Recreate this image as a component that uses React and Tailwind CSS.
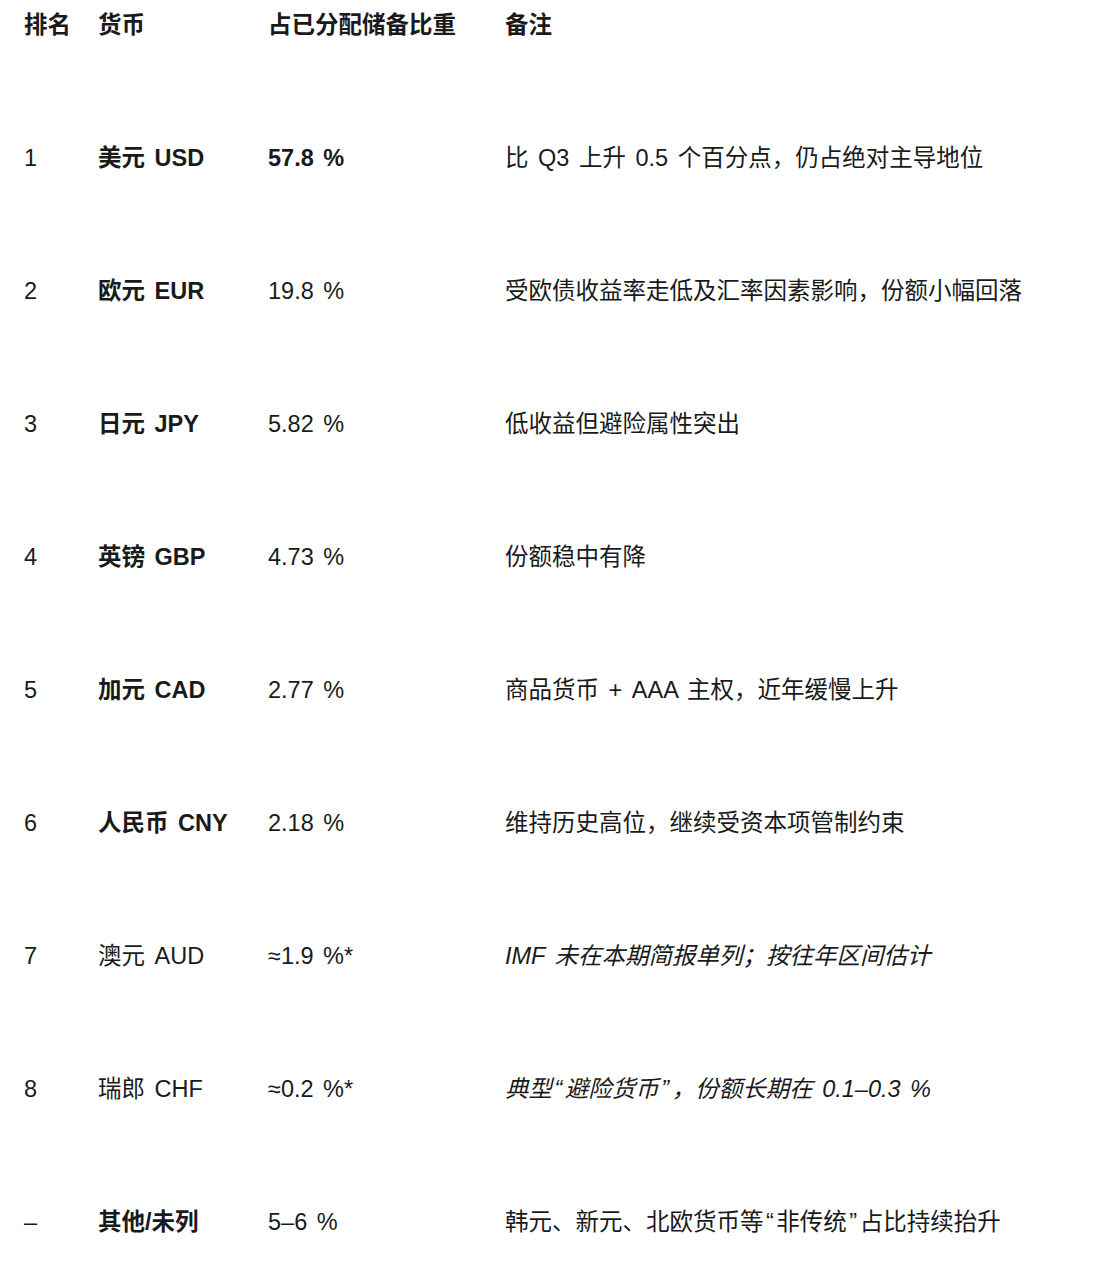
const Q = ({ children }) => <span className="mx-[2.5px]">{children}</span>;

const rows = [
  { rank: '1', cur: '美元 USD', curBold: true, share: '57.8 %', shareBold: true, note: '比 Q3 上升 0.5 个百分点，仍占绝对主导地位' },
  { rank: '2', cur: '欧元 EUR', curBold: true, share: '19.8 %', note: '受欧债收益率走低及汇率因素影响，份额小幅回落' },
  { rank: '3', cur: '日元 JPY', curBold: true, share: '5.82 %', note: '低收益但避险属性突出' },
  { rank: '4', cur: '英镑 GBP', curBold: true, share: '4.73 %', note: '份额稳中有降' },
  { rank: '5', cur: '加元 CAD', curBold: true, share: '2.77 %', note: '商品货币 + AAA 主权，近年缓慢上升' },
  { rank: '6', cur: '人民币 CNY', curBold: true, share: '2.18 %', note: '维持历史高位，继续受资本项管制约束' },
  { rank: '7', cur: '澳元 AUD', share: '≈1.9 %*', note: 'IMF 未在本期简报单列；按往年区间估计', italic: true },
  {
    rank: '8', cur: '瑞郎 CHF', share: '≈0.2 %*', italic: true,
    note: <>典型<Q>“</Q>避险货币<Q>”</Q>，份额长期在 0.1–0.3 %</>,
  },
  {
    rank: '–', cur: '其他/未列', curBold: true, share: '5–6 %',
    note: <>韩元、新元、北欧货币等<Q>“</Q>非传统<Q>”</Q>占比持续抬升</>,
  },
];

const grid = 'grid grid-cols-[74px_170px_237px_1fr] items-center pl-[24px]';

export default function App() {
  return (
    <div
      className="bg-white text-[#1a1a1a] text-[23.5px] min-h-[1269px] [word-spacing:3px]"
      style={{ fontFamily: '"Liberation Sans", "Noto Sans CJK SC", sans-serif' }}
    >
      <div className={`${grid} h-[50px] pt-[2px] font-bold`}>
        <div>排名</div>
        <div>货币</div>
        <div>占已分配储备比重</div>
        <div>备注</div>
      </div>
      <div className="mt-[42px]">
        {rows.map((r, i) => (
          <div key={i} className={`${grid} h-[133px]`}>
            <div>{r.rank}</div>
            <div className={r.curBold ? 'font-bold' : ''}>{r.cur}</div>
            <div className={r.shareBold ? 'font-bold' : ''}>{r.share}</div>
            <div className={r.italic ? 'italic' : ''}>{r.note}</div>
          </div>
        ))}
      </div>
    </div>
  );
}
